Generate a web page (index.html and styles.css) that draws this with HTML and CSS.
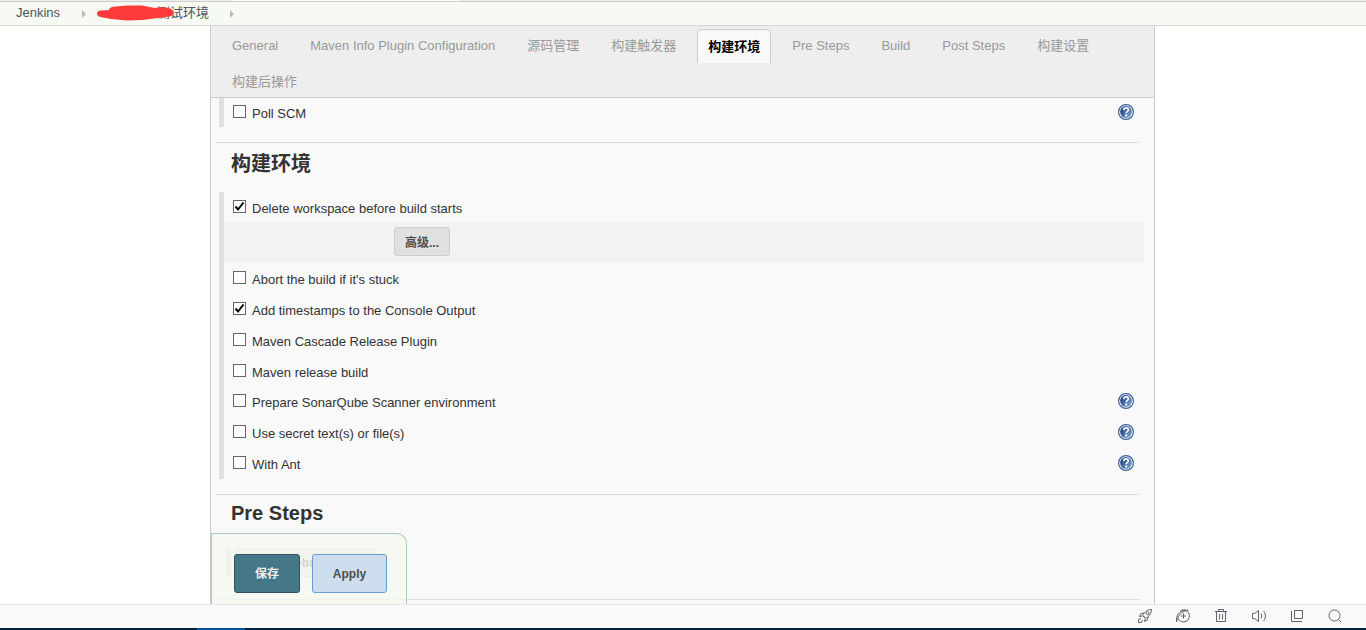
FILE: index.html
```
<!DOCTYPE html>
<html lang="zh-CN">
<head>
<meta charset="utf-8">
<title>Jenkins</title>
<link rel="stylesheet" href="styles.css">
</head>
<body>
<svg class="sprite" aria-hidden="true">
  <defs>
    <linearGradient id="helpfill" x1="0" y1="0" x2="1" y2="1">
      <stop offset="0.2" stop-color="#1d4584"/><stop offset="1" stop-color="#8fb2dc"/>
    </linearGradient>
    <symbol id="help" viewBox="0 0 16 16">
      <circle cx="8" cy="8" r="7.4" fill="#fff" stroke="#34609c" stroke-width="1.2"/>
      <circle cx="8" cy="8" r="5.9" fill="url(#helpfill)"/>
      <path d="M5.7 6.2C5.8 4.5 6.8 3.9 8 3.9c1.500 0 2.400.8 2.400 2 0 1.500-2.200 1.600-2.200 3.300" fill="none" stroke="#fff" stroke-width="1.700"/>
      <rect x="7.200" y="10.400" width="2" height="2" fill="#fff"/>
    </symbol>
  </defs>
</svg>
<div class="top-strip"><span class="strip-left"></span><span class="strip-mid"></span><span class="strip-right"></span></div>
<nav class="breadcrumbs">
  <a href="#">Jenkins</a>
  <span class="arrow"></span>
  <a href="#" class="project">测试环境
    <svg class="scribble" viewBox="0 0 78 17" preserveAspectRatio="none" aria-hidden="true"><path d="M4 5.500 12 5Q12 1.500 19 1.500L30 .5 45 .5 58 3Q64 1.500 73 3.500 78 6 76 10 74 12 61 13L46 15 30 15.500 14 14 6 12.500Q0 12 0 8.500 0 5.500 4 5.500Z"/></svg>
  </a>
  <span class="arrow"></span>
</nav>
<main class="page">
  <div class="config">
    <nav class="tabs">
      <a href="#">General</a>
      <a href="#">Maven Info Plugin Configuration</a>
      <a href="#">源码管理</a>
      <a href="#">构建触发器</a>
      <a href="#" class="active">构建环境</a>
      <a href="#">Pre Steps</a>
      <a href="#">Build</a>
      <a href="#">Post Steps</a>
      <a href="#">构建设置</a>
      <a href="#">构建后操作</a>
    </nav>
    <form class="form">
      <div class="group trigger">
        <div class="row"><label><input type="checkbox">Poll SCM</label><button type="button" class="help" aria-label="Help"><svg><use href="#help"/></svg></button></div>
      </div>
      <section class="section">
        <h2 class="cjk">构建环境</h2>
        <div class="group">
          <div class="row first"><label><input type="checkbox" checked>Delete workspace before build starts</label></div>
          <div class="advanced"><button type="button" class="btn-grey">高级...</button></div>
          <div class="row"><label><input type="checkbox">Abort the build if it's stuck</label></div>
          <div class="row"><label><input type="checkbox" checked>Add timestamps to the Console Output</label></div>
          <div class="row"><label><input type="checkbox">Maven Cascade Release Plugin</label></div>
          <div class="row first"><label><input type="checkbox">Maven release build</label></div>
          <div class="row"><label><input type="checkbox">Prepare SonarQube Scanner environment</label><button type="button" class="help" aria-label="Help"><svg><use href="#help"/></svg></button></div>
          <div class="row"><label><input type="checkbox">Use secret text(s) or file(s)</label><button type="button" class="help" aria-label="Help"><svg><use href="#help"/></svg></button></div>
          <div class="row"><label><input type="checkbox">With Ant</label><button type="button" class="help" aria-label="Help"><svg><use href="#help"/></svg></button></div>
        </div>
      </section>
      <section class="section steps">
        <h2>Pre Steps</h2>
        <div class="builder"><button type="button" class="btn-grey">Add pre-build step</button></div>
      </section>
      <section class="section"></section>
    </form>
    <div class="save-bar">
      <button type="button" class="save">保存</button>
      <button type="button" class="apply">Apply</button>
    </div>
  </div>
</main>
<footer class="status">
  <button type="button" aria-label="Boost"><svg viewBox="0 0 16 16"><path d="M14.500 1.500C10.500 1.500 8 3.500 5.500 7.500l3 3C12 8.500 14.500 5.500 14.500 1.500ZM7 5 4 5.500 2.500 8.500 5.500 8M11 9 10.500 12 7.500 13.500 8 11"/><circle cx="10.700" cy="5.300" r="1.400"/><path d="M4 10.500 1.500 11.500v3H4.500L5.500 12M6 7.500 8.500 10"/></svg></button>
  <button type="button" aria-label="Speed"><svg viewBox="0 0 16 16"><path d="M5.500 2.700A6 6 0 1 1 3 10.500M1.500 14C3 7.500 6.500 3 13.500 2M1.500 14C.8 8 4 3 10.500 1.700M8.500 5.500v5M6 8h5"/></svg></button>
  <button type="button" aria-label="Delete"><svg viewBox="0 0 16 16"><path d="M2 3.500h12M5.500 3.500v-2h5v2M3.500 3.500v10h9v-10M6.500 6v5.500M9.500 6v5.500"/></svg></button>
  <button type="button" aria-label="Sound"><svg viewBox="0 0 16 16"><path d="M1.500 5.500h2l4-3v11l-4-3h-2ZM10 5.500q1.800 2.500 0 5M12.500 3q4 5 0 10"/></svg></button>
  <button type="button" aria-label="Windows"><svg viewBox="0 0 16 16"><path d="M5.500 2.500h8v8h-8ZM2.500 3v10.500H13"/></svg></button>
  <button type="button" aria-label="Search"><svg viewBox="0 0 16 16"><circle cx="7.500" cy="7.500" r="5.500"/><path d="m11.500 11.500 2.500 2.500"/></svg></button>
</footer>
<div class="taskbar"><span></span></div>
</body>
</html>
```
FILE: styles.css
```
* { box-sizing: border-box; }
body {
  margin: 0;
  height: 100vh;
  display: flex;
  flex-direction: column;
  overflow: hidden;
  background: #fff;
  color: #333;
  font: 13px/16px "Liberation Sans", "Noto Sans CJK SC", sans-serif;
}
a { color: inherit; text-decoration: none; }
button { font: inherit; cursor: pointer; }
.sprite { position: absolute; width: 0; height: 0; }

.top-strip { display: flex; height: 2px; border-bottom: 1px solid #ccc; }
.strip-left { width: 231px; background: #eee; }
.strip-mid { width: 228px; background: #fff; }
.strip-right { flex: 1; background: #eee; }

.breadcrumbs {
  display: flex;
  align-items: center;
  height: 24px;
  padding: 0 16px 2px;
  background: #f6faf2;
  border-bottom: 1px solid #d3d7cf;
  color: #4d545d;
}
.arrow {
  margin: 2px 11px 0 22px;
  border: 4px solid transparent;
  border-left-color: #bbb;
  border-right-width: 0;
}
.project { position: relative; padding-left: 60px; }
.project + .arrow { margin-left: 21px; }
.scribble { position: absolute; left: 0; top: 0; width: 78px; height: 17px; fill: #fe3a3a; }

.page { flex: 1; min-height: 0; padding: 0 211px 0 210px; display: flex; }
.config {
  position: relative;
  flex: 1;
  min-width: 0;
  overflow: hidden;
  background: #f9f9f9;
  border: solid #ccc;
  border-width: 0 1px;
}

.tabs {
  display: flex;
  flex-wrap: wrap;
  gap: 4px 10px;
  padding: 3px 11px 0 10px;
  background: #eee;
  border-bottom: 1px solid #ccc;
  color: #999;
}
.tabs a { height: 32px; padding: 0 10px; line-height: 34px; border: 1px solid transparent; border-width: 0 1px; }
.tabs .active {
  height: 34px;
  margin-bottom: -2px;
  border: 1px solid #ccc;
  border-bottom: 0;
  border-radius: 5px 5px 0 0;
  background: #f9f9f9;
  color: #000;
  font-weight: bold;
}

.form { padding: 0 10px 0 5px; }
.group { margin-left: 3px; border-left: 5px solid #e0e0e0; }
.row {
  display: flex;
  align-items: center;
  justify-content: space-between;
  height: 31px;
  padding: 0 10px 0 9px;
}
.row.first { height: 30px; }
.trigger { margin-bottom: 15px; }
.trigger .row { height: 29px; }
.row label { display: flex; align-items: center; gap: 6px; padding-top: 3px; }
.row input {
  appearance: none;
  width: 13px;
  height: 13px;
  margin: 0 0 5px;
  border: 1px solid #666;
  background: #fff;
}
.row input:checked {
  background: #fff url("data:image/svg+xml,%3Csvg xmlns='http://www.w3.org/2000/svg' viewBox='0 0 11 11'%3E%3Cpath d='M1.500 5.500 4 8.500 9.500 1.500' fill='none' stroke='%23000' stroke-width='2'/%3E%3C/svg%3E");
}
.help { padding: 0; border: 0; background: none; height: 16px; margin-bottom: 2px; }
.help svg { display: block; width: 16px; height: 16px; }

.section { position: relative; padding-bottom: 15px; }
.section::before { content: ""; display: block; margin-right: 5px; border-top: 1px solid #ddd; }
h2 { margin: 0; padding: 6px 0 19px 15px; font-size: 20px; line-height: 24px; }
h2.cjk { padding-top: 9px; padding-bottom: 16px; }
.advanced { height: 41px; padding: 5px 0 0 170px; background: #f2f2f2; }
.btn-grey {
  height: 29px;
  padding: 2px 10px 0;
  border: 1px solid #ccc;
  border-radius: 3px;
  background: #e0e0e0;
  color: #4d4d4d;
  font-size: 12px;
  font-weight: bold;
}
.steps { padding-bottom: 22px; }
.steps h2 { padding-bottom: 23px; }
.builder { margin-left: 10px; padding-left: 3px; border-left: 5px solid #ddd; }
.builder .btn-grey { min-width: 143px; padding: 0 10px; }

.save-bar {
  position: absolute;
  left: 0;
  bottom: 0;
  display: flex;
  gap: 12px;
  padding: 20px 19px 11px 22px;
  border: 1px solid #a9ccbb;
  border-bottom: 0;
  border-radius: 0 10px 0 0;
  background: rgba(245, 249, 240, 0.8);
}
.save-bar button { height: 39px; border-radius: 3px; font-size: 12px; font-weight: bold; }
.save { width: 66px; border: 1px solid #2d5464; background: #457788; color: #eee; }
.apply { width: 75px; border: 1px solid #6b9bd2; background: #ccdded; color: #4d4d4d; }

.status {
  display: flex;
  justify-content: flex-end;
  align-items: center;
  gap: 22px;
  height: 24px;
  padding: 0 23px 1px;
  border-top: 1px solid #e8e8e8;
  background: #f9f9f9;
}
.status button { padding: 0; border: 0; background: none; }
.status svg { display: block; width: 16px; height: 16px; fill: none; stroke: #5f6168; stroke-width: 1; }
.taskbar { height: 2px; padding-left: 197px; background: #00203f; }
.taskbar span { display: block; width: 48px; height: 2px; background: #00549c; }
```
